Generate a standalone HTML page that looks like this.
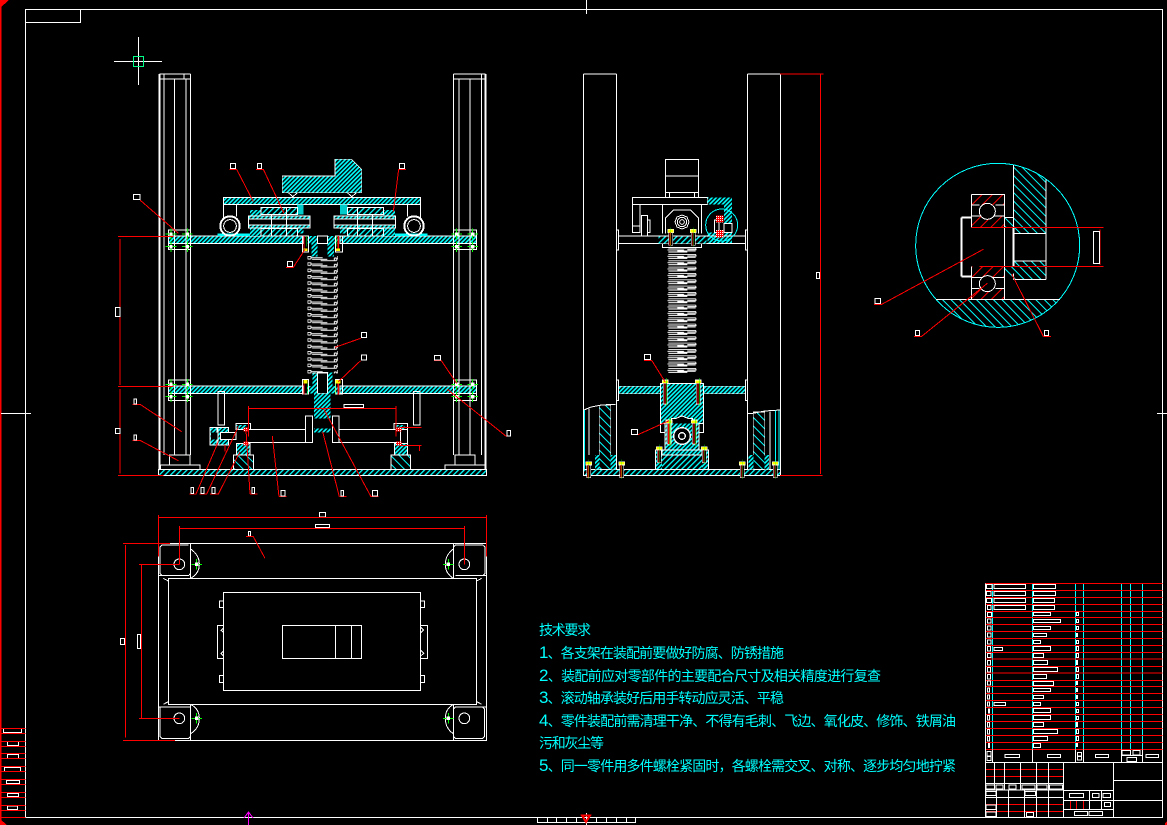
<!DOCTYPE html>
<html lang="zh"><head><meta charset="utf-8"><title>CAD</title>
<style>
html,body{margin:0;padding:0;background:#000;width:1167px;height:825px;overflow:hidden}
svg{display:block}
text{font-family:"Liberation Sans","WenQuanYi Zen Hei","Noto Sans CJK SC",sans-serif;fill:#0ff;font-size:14px}
text tspan{font-size:17px}
.z{shape-rendering:crispEdges}
.w{fill:none;stroke:#fff;stroke-width:3}
.r{fill:none;stroke:#f00;stroke-width:3}
.c{fill:none;stroke:#0ff;stroke-width:3}
.g{fill:none;stroke:#0f0;stroke-width:3}
</style></head><body>
<svg width="1167" height="825" viewBox="0 0 1167 825" xmlns="http://www.w3.org/2000/svg">
<defs>
<pattern id="d" width="9" height="9" patternUnits="userSpaceOnUse" patternTransform="rotate(45)"><rect width="9" height="9" fill="#0ff"/><rect width="4" height="9" fill="#000"/></pattern>
<pattern id="m" width="12" height="12" patternUnits="userSpaceOnUse" patternTransform="rotate(45)"><rect width="12" height="12" fill="#000"/><rect width="4" height="12" fill="#0ff"/></pattern>
<pattern id="l" width="18" height="18" patternUnits="userSpaceOnUse" patternTransform="rotate(-45)"><rect width="18" height="18" fill="#000"/><rect width="3" height="18" fill="#0ff"/></pattern>
<pattern id="q" width="22" height="22" patternUnits="userSpaceOnUse" patternTransform="rotate(45)"><rect width="22" height="22" fill="#000"/><rect width="3" height="22" fill="#f00"/></pattern>
<pattern id="x" width="6" height="6" patternUnits="userSpaceOnUse"><rect width="6" height="6" fill="#f00"/><rect width="3" height="3" fill="#fff"/></pattern>
<pattern id="sp" width="90" height="19" patternUnits="userSpaceOnUse" patternTransform="translate(592,318)">
<rect x="1" y="1" width="10" height="8" rx="2" fill="none" stroke="#fff" stroke-width="3"/>
<rect x="81" y="6" width="7" height="8" rx="2" fill="none" stroke="#fff" stroke-width="3"/>
<path d="M11 5H46M14 10H60M40 14H82" fill="none" stroke="#fff" stroke-width="3"/>
</pattern>
<pattern id="sq" width="88" height="19" patternUnits="userSpaceOnUse" patternTransform="translate(292,293)">
<path d="M3 1H84L88 6H60M0 7H50M3 13H60M30 10H85" fill="none" stroke="#fff" stroke-width="3"/>
</pattern>
<g id="gc"><path class="g" d="M-16 0H16M0-16V16"/><rect x="-5" y="-5" width="10" height="10" fill="#fff"/></g>
<g id="b"><rect x="-9" y="0" width="18" height="10" fill="#ff0" stroke="#fff" stroke-width="2"/><rect x="-6" y="10" width="12" height="62" fill="#000" stroke="#fff" stroke-width="2"/><path d="M-1 10V72" stroke="#f00" stroke-width="4"/><path d="M3 -6V78" stroke="#0f0" stroke-width="2"/></g>
<g id="s"><rect x="-9" y="0" width="18" height="10" fill="#ff0" stroke="#fff" stroke-width="2"/><rect x="-6" y="10" width="12" height="38" fill="#000" stroke="#fff" stroke-width="2"/><path d="M-1 10V48" stroke="#f00" stroke-width="4"/><path d="M0 -6V52" stroke="#0f0" stroke-width="1"/></g>
<clipPath id="cc"><circle cx="413" cy="286" r="245"/></clipPath>
</defs>

<g class="z">
<!-- sheet frame -->
<path d="M0 0H9L0 8Z" fill="#f00"/>
<path d="M0 819L7 825H0Z" fill="#f00"/>
<path d="M1165 823L1167 821V825H1165Z" fill="#f00"/>
<path d="M0.5 0V825" stroke="#f00" stroke-width="2" fill="none"/>
<path d="M25.5 9.5H1162.5V817.5H25.5Z" fill="none" stroke="#fff"/>
<path d="M25.5 22.5H80.5V9.5" fill="none" stroke="#fff"/>
<path d="M586.5 0V14M1 413.5H31M1157 413.5H1167M586.5 813V825" fill="none" stroke="#fff"/>
<path d="M537.5 817.5V822.5H635.5V817.5M547.5 817V822M556.5 817V822M566.5 817V822M576.5 817V822M596.5 817V822M606.5 817V822M616.5 817V822M626.5 817V822" fill="none" stroke="#fff"/>
<path d="M582 815.5H590L586 822Z" fill="none" stroke="#f00" stroke-width="2"/>
<path d="M248.5 813V825M244 818L248.5 812L253 818" fill="none" stroke="#f0f"/>
<!-- crosshair -->
<path d="M114 61.5H162M138.5 37V85" fill="none" stroke="#fff"/>
<rect x="133.5" y="56.5" width="10" height="10" fill="none" stroke="#0f8"/>
</g>

<!-- left strip -->
<g class="z" transform="scale(.33333) translate(0,2100)">
<g class="w"><rect x="10" y="85" width="55" height="12"/><rect x="22" y="125" width="34" height="11"/><rect x="22" y="163" width="34" height="12"/><rect x="13" y="203" width="49" height="11"/><rect x="19" y="241" width="40" height="10"/><rect x="22" y="280" width="34" height="10"/><rect x="22" y="318" width="31" height="11"/></g>
<g class="r"><path d="M0 85H76M0 100H76M0 125H76M0 140H76M0 160H76M0 175H76M0 200H76M0 215H76M0 238H76M0 253H76M0 277H76M0 292H76M0 316H76M0 331H76M0 352H76"/></g>
</g>

<!-- front view -->
<g class="z" transform="translate(110,150) scale(.33333)">
<rect x="175" y="258" width="405" height="23" fill="url(#d)" stroke="#fff" stroke-width="3"/>
<rect x="690" y="258" width="410" height="23" fill="url(#d)" stroke="#fff" stroke-width="3"/>
<rect x="175" y="708" width="405" height="23" fill="url(#d)" stroke="#fff" stroke-width="3"/>
<rect x="690" y="708" width="410" height="23" fill="url(#d)" stroke="#fff" stroke-width="3"/>
<rect x="592" y="258" width="30" height="23" fill="url(#d)"/><rect x="652" y="258" width="30" height="23" fill="url(#d)"/>
<rect x="605" y="281" width="18" height="38" fill="url(#d)"/><rect x="652" y="281" width="20" height="38" fill="url(#d)"/>
<rect x="592" y="708" width="30" height="23" fill="url(#d)"/><rect x="652" y="708" width="30" height="23" fill="url(#d)"/>
<rect x="608" y="668" width="14" height="40" fill="url(#d)"/><rect x="652" y="668" width="16" height="40" fill="url(#d)"/>
<rect x="145" y="958" width="985" height="18" fill="url(#m)" stroke="#fff" stroke-width="3"/>
<g class="w">
<path d="M148 -228V958" style="stroke-width:6"/><path d="M162 -228V915M193 -213V915M228 -213V915M242 -228V915M148 -228H242M148 -213H242M222 -228V-213"/>
<path d="M1127 -228V958" style="stroke-width:6"/><path d="M1030 -228V915M1047 -213V915M1080 -213V915M1115 -228V915M1030 -228H1127M1030 -213H1127"/>
<rect x="178" y="915" width="62" height="30"/><rect x="152" y="945" width="118" height="13"/>
<rect x="1035" y="915" width="60" height="30"/><rect x="1005" y="945" width="120" height="13"/>
<rect x="175" y="240" width="67" height="58"/><rect x="1030" y="240" width="70" height="58"/>
<rect x="175" y="690" width="67" height="62"/><rect x="1030" y="690" width="70" height="62"/>
<path d="M622 258H652V281H622ZM622 668H652V731H622Z"/>
</g>
<!-- top assembly -->
<path d="M517 78H675V28H725L755 58V128H517Z" fill="url(#d)" stroke="#fff" stroke-width="2"/>
<path class="w" d="M535 128L548 140L563 128M712 128L725 140L740 128"/>
<rect x="340" y="142" width="592" height="22" fill="url(#d)" stroke="#fff" stroke-width="3"/>
<path class="w" d="M340 164V205M380 164V200M892 164V200M932 164V205"/>
<rect x="322" y="250" width="98" height="8" fill="#0ff"/><rect x="855" y="250" width="98" height="8" fill="#0ff"/>
<g class="w" style="stroke-width:6"><circle cx="360" cy="228" r="29"/><circle cx="912" cy="228" r="29"/></g>
<g class="w"><circle cx="360" cy="228" r="19"/><circle cx="912" cy="228" r="19"/></g>
<g stroke="#fff" stroke-width="3">
<rect x="420" y="180" width="35" height="78" fill="url(#d)" stroke="none"/>
<rect x="820" y="180" width="35" height="78" fill="url(#d)" stroke="none"/>
<rect x="561" y="164" width="20" height="30" fill="#0cc" stroke="none"/><rect x="561" y="235" width="20" height="15" fill="url(#d)" stroke="none"/>
<rect x="690" y="164" width="22" height="30" fill="#0cc" stroke="none"/><rect x="690" y="235" width="22" height="15" fill="url(#d)" stroke="none"/>
<rect x="453" y="172" width="110" height="21" fill="url(#m)"/><rect x="453" y="235" width="110" height="23" fill="url(#m)"/>
<rect x="712" y="172" width="108" height="21" fill="url(#m)"/><rect x="712" y="235" width="108" height="23" fill="url(#m)"/>
<rect x="415" y="198" width="185" height="36" fill="url(#d)"/><rect x="672" y="198" width="185" height="36" fill="url(#d)"/>
<rect x="415" y="207" width="185" height="18" fill="#000"/><rect x="672" y="207" width="185" height="18" fill="#000"/>
<path d="M485 193V258M530 172V258M742 172V258M788 193V258" fill="none"/>
</g>
<!-- spring -->
<rect x="592" y="318" width="92" height="352" fill="url(#sp)"/>
<!-- bottom mechanism -->
<rect x="612" y="731" width="50" height="75" fill="url(#d)"/><rect x="612" y="835" width="50" height="13" fill="url(#d)"/>
<g class="w">
<path d="M415 838H585M415 878H585M687 838H858M687 878H858"/>
<rect x="586" y="798" width="22" height="80"/><rect x="667" y="798" width="20" height="80"/>
<rect x="324" y="725" width="20" height="100"/><rect x="910" y="725" width="20" height="100"/>
<rect x="702" y="763" width="58" height="10"/>
<rect x="378" y="820" width="44" height="18"/><rect x="852" y="820" width="40" height="18"/>
<rect x="872" y="838" width="21" height="42"/>
</g>
<rect x="300" y="832" width="56" height="53" fill="url(#d)" stroke="#fff" stroke-width="3"/>
<path class="w" d="M322 832V885" style="stroke-width:6"/><rect x="303" y="848" width="19" height="20" fill="#000"/><rect x="332" y="848" width="46" height="20" fill="#000" stroke="#fff" stroke-width="3"/>
<rect x="380" y="880" width="40" height="35" fill="url(#d)" stroke="#fff" stroke-width="3"/>
<rect x="853" y="880" width="40" height="35" fill="url(#d)" stroke="#fff" stroke-width="3"/>
<rect x="370" y="915" width="60" height="43" fill="url(#l)" stroke="#fff" stroke-width="3"/>
<rect x="843" y="915" width="59" height="43" fill="url(#l)" stroke="#fff" stroke-width="3"/>
<rect x="380" y="825" width="30" height="12" fill="url(#d)"/><rect x="860" y="825" width="24" height="12" fill="url(#d)"/>
<g fill="url(#x)"><rect x="400" y="832" width="16" height="12"/><rect x="400" y="874" width="16" height="12"/><rect x="858" y="832" width="16" height="12"/><rect x="858" y="874" width="16" height="12"/></g>
<!-- bolts -->
<use href="#gc" x="183" y="252"/><use href="#gc" x="232" y="252"/><use href="#gc" x="183" y="290"/><use href="#gc" x="232" y="290"/>
<use href="#gc" x="1040" y="252"/><use href="#gc" x="1088" y="252"/><use href="#gc" x="1040" y="290"/><use href="#gc" x="1088" y="290"/>
<use href="#gc" x="183" y="703"/><use href="#gc" x="232" y="703"/><use href="#gc" x="183" y="740"/><use href="#gc" x="232" y="740"/>
<use href="#gc" x="1040" y="703"/><use href="#gc" x="1088" y="703"/><use href="#gc" x="1040" y="740"/><use href="#gc" x="1088" y="740"/>
<g class="w"><rect x="577" y="258" width="18" height="48"/><rect x="676" y="258" width="22" height="48"/><rect x="577" y="688" width="18" height="44"/><rect x="676" y="688" width="22" height="44"/></g>
<path d="M582 258V300M685 258V300M582 700V733M685 700V733" stroke="#f00" stroke-width="4"/>
<path d="M590 258V290M680 258V290M592 700V733M677 700V733" stroke="#0f0" stroke-width="2"/>
<g fill="#ff0"><rect x="581" y="295" width="12" height="8"/><rect x="678" y="295" width="12" height="8"/><rect x="580" y="690" width="13" height="10"/><rect x="677" y="690" width="14" height="10"/></g>
<!-- red dims and leaders -->
<g class="r">
<path d="M24 259H190M24 709H190M24 976H160M30 267V705M30 717V970"/>
<path d="M415 775H858M415 768V860M858 768V860"/>
<path d="M90 150L205 250M67 763H90L215 845M67 871H90L205 932"/>
<path d="M358 58H380L430 155M438 58H460L522 190M866 58H888M866 58L850 185"/>
<path d="M528 352H550L585 298M752 565L675 592M752 632L685 695M972 632H994L1040 700M1190 860L1012 718"/>
<path d="M238 1032H258L325 875M268 1032H290L385 830M300 1032H325L390 905M420 1032H443M420 1032L408 840"/>
<path d="M507 1040H530M507 1040L487 858M688 1040H710M688 1040L638 845M783 1040H805M783 1040L640 775"/>
<path d="M870 832H935M870 886H935M345 885V905M928 886V903"/>
</g>
<g class="w">
<rect x="16" y="472" width="14" height="28"/><rect x="16" y="835" width="14" height="16"/>
<rect x="70" y="133" width="20" height="16"/><rect x="72" y="747" width="8" height="15"/><rect x="72" y="855" width="8" height="15"/>
<rect x="361" y="40" width="16" height="16"/><rect x="442" y="40" width="13" height="16"/><rect x="868" y="40" width="16" height="16"/>
<rect x="532" y="334" width="16" height="16"/><rect x="754" y="547" width="16" height="16"/><rect x="754" y="615" width="16" height="15"/><rect x="973" y="616" width="19" height="14"/>
<rect x="1191" y="842" width="11" height="16"/>
<rect x="243" y="1012" width="8" height="18"/><rect x="273" y="1012" width="9" height="18"/><rect x="306" y="1012" width="9" height="18"/><rect x="426" y="1012" width="8" height="18"/>
<rect x="513" y="1021" width="12" height="17"/><rect x="693" y="1021" width="8" height="17"/><rect x="787" y="1021" width="16" height="17"/>
</g>
</g>

<!-- side view -->
<g class="z" transform="translate(570,150) scale(.33333)">
<g class="w"><path d="M40 -228V976M140 -228V958M532 -228V958M632 -228V976M40 -228H140M532 -228H632"/>
<rect x="286" y="28" width="100" height="100"/><path d="M286 78H386"/><path d="M286 128V142M298 128V142M374 128V142M386 128V142"/>
<path d="M187 142H412V164H187Z"/><path d="M187 164V248H210V164M187 228H210M214 196H232V258H214ZM232 210H240V248H232"/>
<path d="M277 164V250M395 164V250M286 250V205L310 180H362L386 205V250"/>
<path d="M336 195L351 201L357 216L351 231L336 237L321 231L315 216L321 201Z"/>
<circle cx="336" cy="216" r="14"/><circle cx="336" cy="216" r="7"/>
</g>
<rect x="412" y="142" width="74" height="22" fill="url(#d)"/><rect x="462" y="164" width="24" height="56" fill="url(#d)"/>
<rect x="412" y="248" width="74" height="33" fill="url(#d)"/>
<g class="w"><rect x="146" y="258" width="380" height="23"/><rect x="140" y="240" width="6" height="60"/><rect x="526" y="240" width="6" height="60"/><path d="M277 281V293H395V281"/></g>
<rect x="265" y="259" width="145" height="21" fill="url(#m)"/>
<circle class="c" cx="455" cy="225" r="48"/>
<rect class="w" x="433" y="210" width="14" height="38"/><rect class="w" x="462" y="220" width="24" height="28"/>
<g fill="url(#x)"><rect x="438" y="196" width="22" height="22"/><rect x="438" y="240" width="22" height="22"/></g>
<use href="#s" x="302" y="238"/><use href="#s" x="370" y="238"/>
<rect x="292" y="293" width="88" height="377" fill="url(#sq)"/>
<rect x="146" y="709" width="380" height="22" fill="url(#d)" stroke="#fff" stroke-width="2"/>
<g class="w"><rect x="140" y="690" width="6" height="62"/><rect x="526" y="690" width="6" height="62"/></g>
<rect x="271" y="700" width="130" height="120" fill="url(#d)" stroke="#fff" stroke-width="3"/>
<rect x="285" y="820" width="102" height="95" fill="url(#d)" stroke="#fff" stroke-width="2"/>
<g class="w"><rect x="271" y="820" width="14" height="28"/><rect x="387" y="820" width="14" height="28"/>
<path d="M305 820V805H318L336 798L354 805H368V820" fill="#000"/></g>
<circle cx="336" cy="858" r="25" fill="#000" stroke="#fff" stroke-width="4"/><circle cx="336" cy="858" r="10" fill="none" stroke="#fff" stroke-width="4"/>
<rect x="256" y="900" width="160" height="58" fill="url(#d)" stroke="#fff" stroke-width="3"/><rect x="276" y="915" width="120" height="43" fill="url(#m)"/>
<path class="w" d="M276 900V915H396V900"/>
<rect x="40" y="958" width="592" height="18" fill="url(#m)" stroke="#fff" stroke-width="3"/>
<!-- side lower posts -->
<rect x="88" y="766" width="34" height="192" fill="url(#l)" stroke="#fff" stroke-width="2"/>
<rect x="550" y="786" width="34" height="172" fill="url(#l)" stroke="#fff" stroke-width="2"/>
<rect x="75" y="915" width="13" height="43" fill="url(#d)"/><rect x="122" y="915" width="16" height="43" fill="url(#d)"/>
<rect x="535" y="915" width="15" height="43" fill="url(#d)"/><rect x="584" y="915" width="13" height="43" fill="url(#d)"/>
<path class="w" d="M42 780L60 772L88 766L122 763H137M57 775V915M534 790H550L584 783L632 780M600 785V958"/>
<path class="c" d="M44 780V958M617 782V958M627 782V958"/>
<use href="#b" x="286" y="690"/><use href="#b" x="385" y="690"/>
<use href="#b" x="297" y="810"/><use href="#b" x="373" y="810"/>
<use href="#s" x="268" y="890"/><use href="#s" x="403" y="890"/>
<use href="#s" x="56" y="935"/><use href="#s" x="155" y="935"/><use href="#s" x="517" y="935"/><use href="#s" x="616" y="935"/>
<g class="r"><path d="M630 -228H760M630 976H758M751 -228V972"/><path d="M222 631H245L285 695M204 854L297 812"/></g>
<g class="w"><rect x="739" y="367" width="10" height="19"/><rect x="223" y="613" width="18" height="16"/><rect x="184" y="838" width="18" height="16"/></g>
</g>

<!-- detail circle -->
<g class="z" transform="translate(860,150) scale(.33333)">
<g clip-path="url(#cc)">
<rect x="460" y="40" width="98" height="210" fill="url(#l)"/>
<rect x="460" y="333" width="98" height="55" fill="url(#l)"/>
<rect x="150" y="448" width="480" height="90" fill="url(#l)"/>
</g>
<rect x="434" y="203" width="26" height="29" fill="url(#l)"/><rect x="434" y="350" width="26" height="30" fill="url(#l)"/>
<rect x="334" y="133" width="100" height="32" fill="url(#q)"/><rect x="334" y="198" width="100" height="34" fill="url(#q)"/>
<rect x="334" y="350" width="100" height="32" fill="url(#q)"/><rect x="334" y="415" width="100" height="33" fill="url(#q)"/>
<circle class="c" cx="413" cy="286" r="246"/>
<g class="w">
<path d="M460 45V250M558 88V388M460 250H558M460 388H558M460 333H558M460 388V370"/>
<path d="M460 232V348" style="stroke-width:6"/>
<path d="M334 133H434V448M334 133V232M334 350V448M334 165H358M406 165H434M334 198H434M334 382H434M334 415H358M406 415H434M434 203H460"/>
<path d="M304 203V380" style="stroke-width:6"/><path d="M304 203H334M304 380H334" style="stroke-width:6"/>
<path d="M228 448H600"/>
</g>
<circle cx="382" cy="184" r="24" fill="#000" stroke="#fff" stroke-width="3"/>
<circle cx="382" cy="401" r="24" fill="#000" stroke="#fff" stroke-width="3"/>
<g class="r">
<path d="M334 232H730M358 349H730M720 238V345"/>
<path d="M42 463H65L370 298M162 559H185L382 400M550 559H573M550 559L455 372"/>
</g>
<g class="w"><rect x="700" y="244" width="19" height="97"/><rect x="45" y="445" width="17" height="16"/><rect x="166" y="541" width="12" height="16"/><rect x="553" y="541" width="12" height="16"/></g>
</g>

<!-- plan view -->
<g class="z" transform="translate(110,505) scale(.33333)">
<g class="w">
<rect x="145" y="115" width="985" height="591"/>
<rect x="175" y="220" width="925" height="378"/>
<path d="M242 115V220M1030 115V220M242 598V706M1030 598V706"/>
<path d="M236 120H156L150 126V205L156 212H236L242 205M1036 212H1118L1125 205V126L1118 120H1036L1030 126M150 608V694L156 700H236L242 694M1030 694L1036 700H1118L1124 694V612L1118 606H1036L1030 612"/>
<path d="M145 212H175M1100 212H1130M145 606H242M1100 606H1130M160 220L175 228M1115 220L1100 228M160 598L175 590M1115 598L1100 590"/>
<path d="M242 132Q268 150 268 178Q268 205 242 220M1030 132Q1006 150 1006 178Q1006 205 1030 220M242 598Q268 612 268 640Q268 670 242 686M1030 598Q1006 612 1006 640Q1006 670 1030 686"/>
<circle cx="208" cy="178" r="16"/><circle cx="1063" cy="178" r="16"/><circle cx="208" cy="640" r="16"/><circle cx="1063" cy="640" r="16"/>
<rect x="340" y="262" width="592" height="294"/>
<rect x="517" y="361" width="238" height="100"/><path d="M676 361V461M724 361V461"/>
<rect x="328" y="288" width="12" height="20"/><rect x="932" y="288" width="12" height="20"/><rect x="328" y="512" width="12" height="21"/><rect x="932" y="512" width="12" height="21"/>
<rect x="322" y="361" width="18" height="100"/><rect x="932" y="361" width="21" height="100"/>
<path d="M340 370L333 376L340 382M340 438L333 445L340 452M932 366L941 375L932 383M932 436L941 445L932 453"/>
<rect x="628" y="22" width="19" height="14"/><rect x="616" y="58" width="43" height="10"/><rect x="415" y="79" width="7" height="14"/><rect x="31" y="400" width="13" height="19"/><rect x="82" y="388" width="10" height="43"/>
</g>
<use href="#gc" x="260" y="178"/><use href="#gc" x="1015" y="178"/><use href="#gc" x="260" y="640"/><use href="#gc" x="1015" y="640"/>
<g class="r">
<path d="M145 37H1130M145 30V155M1129 30V155M208 70H1063M208 63V178M1063 63V178"/>
<path d="M408 95H430L465 160"/>
<path d="M39 115H180M39 706H195M46 120V697M87 178H208M87 640H208M94 178V640"/>
</g>
</g>

<!-- title block -->
<g class="z" transform="translate(980,575) scale(.33333)">
<g class="c"><path d="M38 25V523M157 25V523M286 25V523M310 25V523M424 25V523M451 25V523M488 25V523"/></g>
<g class="r"><path d="M15 25H548M15 46H548M15 67H548M15 88H548M15 109H548M15 127H548M15 148H548M15 169H548M15 190H548M15 211H548M15 232H548M15 252H548M15 274H548M15 294H548M15 316H548M15 335H548M15 355H548M15 376H548M15 397H548M15 418H548M15 439H548M15 460H548M15 481H548M15 502H548M15 523H548"/>
<path d="M17 583H250M17 604H250M17 688H250M17 709H250M271 676V704M289 676V704M310 676V704"/></g>
<g class="w">
<path d="M16 25V727M16 562H548M38 523V562M157 523V562M286 523V562M310 523V562M424 523V562M488 523V562M424 541H488"/>
<path d="M250 562V727M400 562V727M400 616H548M400 676H548M43 562V645M73 562V645M121 562V645M169 562V645M205 562V645M16 625H250M16 645H250M16 667H250M49 645V727M85 645V727M133 645V727M169 645V727M205 645V727M250 646H400M250 676H400M250 704H400M328 646V704M364 646V704"/>
<rect x="20" y="28" width="16" height="13"/><rect x="20" y="49" width="13" height="13"/><rect x="20" y="70" width="15" height="13"/><rect x="22" y="91" width="11" height="13"/><rect x="22" y="112" width="13" height="13"/><rect x="22" y="132" width="11" height="12"/><rect x="22" y="153" width="11" height="12"/><rect x="22" y="174" width="11" height="12"/><rect x="22" y="195" width="11" height="12"/><rect x="22" y="214" width="10" height="14"/><rect x="22" y="235" width="11" height="13"/><rect x="22" y="256" width="10" height="14"/><rect x="22" y="277" width="10" height="14"/><rect x="22" y="298" width="10" height="14"/><rect x="22" y="318" width="10" height="12"/><rect x="22" y="339" width="7" height="12"/><rect x="22" y="360" width="7" height="12"/><rect x="22" y="381" width="7" height="12"/><rect x="25" y="402" width="4" height="12"/><rect x="22" y="421" width="6" height="14"/><rect x="23" y="442" width="5" height="14"/><rect x="23" y="463" width="5" height="14"/><rect x="23" y="484" width="5" height="14"/><rect x="25" y="505" width="4" height="12"/>
<rect x="42" y="28" width="95" height="13"/><rect x="42" y="49" width="95" height="13"/><rect x="42" y="70" width="95" height="13"/><rect x="42" y="91" width="95" height="13"/><rect x="42" y="217" width="26" height="10"/><rect x="42" y="382" width="35" height="10"/>
<rect x="160" y="28" width="67" height="13"/><rect x="160" y="49" width="67" height="13"/><rect x="160" y="70" width="64" height="13"/><rect x="160" y="91" width="64" height="13"/><rect x="160" y="112" width="52" height="10"/><rect x="160" y="133" width="82" height="10"/><rect x="160" y="154" width="52" height="10"/><rect x="160" y="175" width="40" height="10"/><rect x="160" y="196" width="22" height="10"/><rect x="160" y="214" width="52" height="13"/><rect x="160" y="235" width="31" height="13"/><rect x="160" y="256" width="43" height="13"/><rect x="160" y="277" width="73" height="13"/><rect x="160" y="298" width="40" height="13"/><rect x="160" y="319" width="61" height="13"/><rect x="160" y="340" width="52" height="10"/><rect x="160" y="361" width="31" height="10"/><rect x="160" y="382" width="22" height="10"/><rect x="160" y="400" width="52" height="13"/><rect x="160" y="421" width="52" height="13"/><rect x="160" y="442" width="31" height="13"/><rect x="160" y="463" width="73" height="13"/><rect x="160" y="484" width="43" height="13"/><rect x="160" y="505" width="22" height="13"/>
<rect x="289" y="112" width="7" height="10"/><rect x="289" y="133" width="7" height="10"/><rect x="289" y="154" width="7" height="10"/><rect x="289" y="175" width="4" height="10"/><rect x="289" y="196" width="7" height="10"/><rect x="289" y="214" width="7" height="13"/><rect x="289" y="235" width="7" height="13"/><rect x="289" y="256" width="4" height="13"/><rect x="289" y="277" width="7" height="13"/><rect x="289" y="298" width="7" height="13"/><rect x="289" y="319" width="4" height="10"/><rect x="289" y="340" width="4" height="10"/><rect x="289" y="361" width="4" height="10"/><rect x="289" y="382" width="7" height="10"/><rect x="289" y="403" width="7" height="10"/><rect x="289" y="424" width="7" height="10"/><rect x="289" y="442" width="4" height="13"/><rect x="289" y="463" width="7" height="13"/><rect x="289" y="484" width="7" height="13"/><rect x="289" y="505" width="4" height="10"/>
<rect x="21" y="530" width="12" height="13"/><rect x="21" y="544" width="12" height="12"/><rect x="75" y="538" width="44" height="10"/><rect x="202" y="538" width="40" height="10"/><rect x="292" y="532" width="13" height="11"/><rect x="292" y="544" width="13" height="11"/><rect x="346" y="538" width="40" height="10"/><rect x="498" y="538" width="38" height="10"/><rect x="426" y="526" width="25" height="14"/><rect x="459" y="526" width="21" height="14"/><rect x="441" y="547" width="29" height="13"/>
<rect x="18" y="630" width="25" height="12"/><rect x="48" y="630" width="21" height="12"/><rect x="87" y="630" width="21" height="12"/><rect x="126" y="630" width="39" height="12"/><rect x="171" y="630" width="30" height="12"/><rect x="208" y="630" width="40" height="12"/>
<rect x="18" y="650" width="30" height="12"/><rect x="135" y="650" width="32" height="12"/><rect x="18" y="690" width="30" height="13"/><rect x="18" y="711" width="30" height="14"/><rect x="139" y="712" width="22" height="13"/>
<rect x="268" y="655" width="43" height="13"/><rect x="337" y="655" width="20" height="13"/><rect x="369" y="655" width="23" height="13"/><rect x="373" y="682" width="19" height="13"/><rect x="283" y="709" width="40" height="13"/><rect x="327" y="709" width="41" height="13"/>
</g>
</g>

<!-- technical requirements -->
<g>
<text x="539" y="635" textLength="52" lengthAdjust="spacing">技术要求</text>
<text x="539" y="658" textLength="245" lengthAdjust="spacing"><tspan>1</tspan>、各支架在装配前要做好防腐、防锈措施</text>
<text x="539" y="681" textLength="342" lengthAdjust="spacing"><tspan>2</tspan>、装配前应对零部件的主要配合尺寸及相关精度进行复查</text>
<text x="539" y="703" textLength="245" lengthAdjust="spacing"><tspan>3</tspan>、滚动轴承装好后用手转动应灵活、平稳</text>
<text x="539" y="726" textLength="417" lengthAdjust="spacing"><tspan>4</tspan>、零件装配前需清理干净、不得有毛刺、飞边、氧化皮、修饰、铁屑油</text>
<text x="539" y="748" textLength="65" lengthAdjust="spacing">污和灰尘等</text>
<text x="539" y="771" textLength="417" lengthAdjust="spacing"><tspan>5</tspan>、同一零件用多件螺栓紧固时，各螺栓需交叉、对称、逐步均匀地拧紧</text>
</g>
</svg>
</body></html>
